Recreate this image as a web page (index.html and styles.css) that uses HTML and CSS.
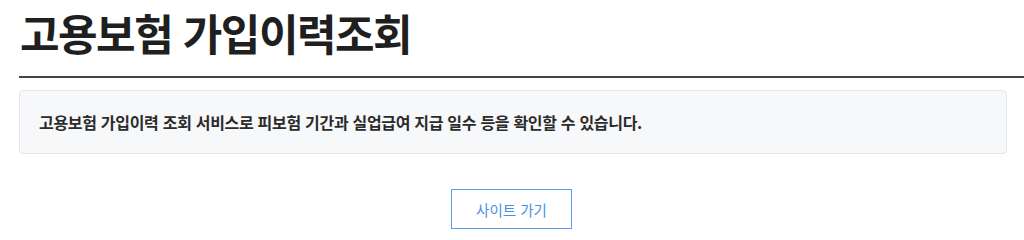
FILE: index.html
```html
<!DOCTYPE html>
<html lang="ko">
<head>
<meta charset="utf-8">
<link rel="stylesheet" href="styles.css">
</head>
<body>
<div class="page">
  <h1 class="title">고용보험 가입이력조회</h1>
  <div class="info">
    <p class="info-text">고용보험 가입이력 조회 서비스로 피보험 기간과 실업급여 지급 일수 등을 확인할 수 있습니다.</p>
  </div>
  <div class="actions">
    <a class="btn" href="#">사이트 가기</a>
  </div>
</div>
</body>
</html>
```
FILE: styles.css
```css
html, body {
  margin: 0;
  padding: 0;
  background: #fff;
}
body {
  font-family: "Noto Sans CJK KR", "Noto Sans", sans-serif;
  color: #222;
}
.page {
  padding: 0 0 0 19px;
}
.title {
  margin: 0;
  padding: 2px 0 14px 1px;
  font-size: 43px;
  font-weight: 700;
  line-height: 60px;
  letter-spacing: -1.5px;
  color: #1f1f1f;
  border-bottom: 2px solid #444;
}
.info {
  box-sizing: border-box;
  margin: 12px 17px 0 0;
  height: 64px;
  display: flex;
  align-items: center;
  padding: 0 19px;
  background: #f7f8fa;
  border: 1px solid #e4e6ea;
  border-radius: 4px;
}
.info-text {
  margin: 0;
  font-size: 16px;
  font-weight: 700;
  color: #2b2b2b;
  letter-spacing: -0.3px;
}
.actions {
  display: flex;
  justify-content: center;
  margin: 35px 20px 0 0;
}
.btn {
  box-sizing: border-box;
  display: flex;
  align-items: center;
  justify-content: center;
  width: 121px;
  height: 40px;
  border: 1px solid #5a9cf0;
  color: #4a8fe6;
  font-size: 14.5px;
  text-decoration: none;
}
```
